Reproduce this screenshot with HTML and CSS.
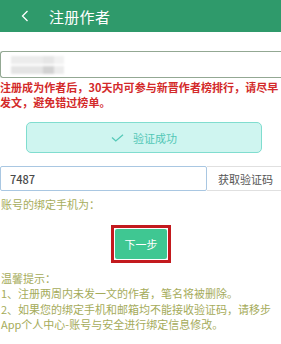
FILE: index.html
```html
<!DOCTYPE html>
<html lang="zh">
<head>
<meta charset="utf-8">
<link rel="stylesheet" href="styles.css">
</head>
<body>
<header class="bar">
  <svg class="back" width="8" height="12" viewBox="0 0 8 12"><path d="M6.5 1 L1.5 6 L6.5 11" fill="none" stroke="#fff" stroke-width="1.3"/></svg>
  <span class="title">注册作者</span>
</header>
<div class="name-box">
  <div class="blur">
    <span class="b1"></span><span class="b2"></span><span class="b3"></span>
  </div>
</div>
<p class="warn">注册成为作者后，30天内可参与新晋作者榜排行，请尽早发文，避免错过榜单。</p>
<div class="ok-box">
  <svg width="13" height="8" viewBox="0 0 13 8"><path d="M1 3.5 L4.8 7 L12 0.8" fill="none" stroke="#56c9b8" stroke-width="1.3"/></svg>
  <span>验证成功</span>
</div>
<div class="code-row">
  <div class="code-input">7487</div>
  <div class="code-btn">获取验证码</div>
</div>
<p class="label">账号的绑定手机为：</p>
<div class="next-wrap">
  <div class="next-outline"><div class="next-btn">下一步</div></div>
</div>
<div class="tips">
  <p>温馨提示：</p>
  <p>1、注册两周内未发一文的作者，笔名将被删除。</p>
  <p>2、如果您的绑定手机和邮箱均不能接收验证码，请移步App个人中心-账号与安全进行绑定信息修改。</p>
</div>
</body>
</html>
```
FILE: styles.css
```css
html, body {
  margin: 0;
  padding: 0;
  background: #fff;
  overflow: hidden;
}
body {
  width: 281px;
  height: 344px;
  font-family: "Noto Sans CJK SC", "Noto Sans", sans-serif;
  font-size: 11px;
}
p { margin: 0; }
.bar {
  height: 32px;
  background: #2f9a6b;
  display: flex;
  align-items: center;
  padding-left: 21px;
  box-sizing: border-box;
}
.back { margin-right: 20px; }
.title {
  color: #fff;
  font-size: 15px;
  letter-spacing: 0.3px;
}
.name-box {
  margin-top: 19px;
  height: 27px;
  box-sizing: border-box;
  border: 1px solid #93a893;
  border-right: none;
  border-radius: 3px 0 0 3px;
  display: flex;
  align-items: center;
  padding-left: 10px;
}
.blur {
  display: flex;
  height: 18px;
  filter: blur(1.2px);
}
.blur span { display: block; height: 18px; }
.b1 { width: 32px; background: linear-gradient(#ececec 0 45%, #fff 45% 55%, #e4e4e4 55%); }
.b2 { width: 11px; background: linear-gradient(#e6e6e6 0 45%, #fff 45% 55%, #d2d2d2 55%); }
.b3 { width: 10px; background: linear-gradient(#f2f2f2 0 45%, #fff 45% 55%, #ececec 55%); }
.warn {
  margin-top: 2px;
  color: #d32a2a;
  font-weight: bold;
  line-height: 14.5px;
  font-size: 11px;
  letter-spacing: 0.05px;
}
.ok-box {
  margin: 13px 19px 0 26px;
  height: 31px;
  box-sizing: border-box;
  background: #cff5f0;
  border: 1px solid #80ddcf;
  border-radius: 5px;
  display: flex;
  align-items: center;
  justify-content: center;
  gap: 9px;
  color: #52c7b6;
}
.code-row {
  margin-top: 13px;
  display: flex;
  height: 25px;
}
.code-input {
  width: 207px;
  flex: none;
  box-sizing: border-box;
  border: 1px solid #a9c7e2;
  border-radius: 2px;
  padding-left: 9px;
  display: flex;
  align-items: center;
  color: #4a4a4a;
  font-weight: 500;
}
.code-btn {
  flex: 1;
  box-sizing: border-box;
  border: 1px solid #e0e0e0;
  border-left: none;
  border-right: none;
  padding-left: 11px;
  display: flex;
  align-items: center;
  color: #555;
  white-space: nowrap;
}
.label {
  margin-top: 6px;
  color: #a7ad5c;
  line-height: 14px;
  padding-left: 1px;
}
.next-wrap {
  margin-top: 14px;
  display: flex;
  justify-content: center;
}
.next-outline {
  width: 60px;
  height: 38px;
  box-sizing: border-box;
  border: 3px solid #c31a1e;
  padding: 1px;
  margin-left: 1px;
}
.next-btn {
  height: 100%;
  background: #3fc792;
  border-radius: 2px;
  color: #fff;
  display: flex;
  align-items: center;
  justify-content: center;
}
.tips {
  margin-top: 8px;
  color: #a5ab5a;
  line-height: 15.3px;
  padding-left: 1px;
}
```
